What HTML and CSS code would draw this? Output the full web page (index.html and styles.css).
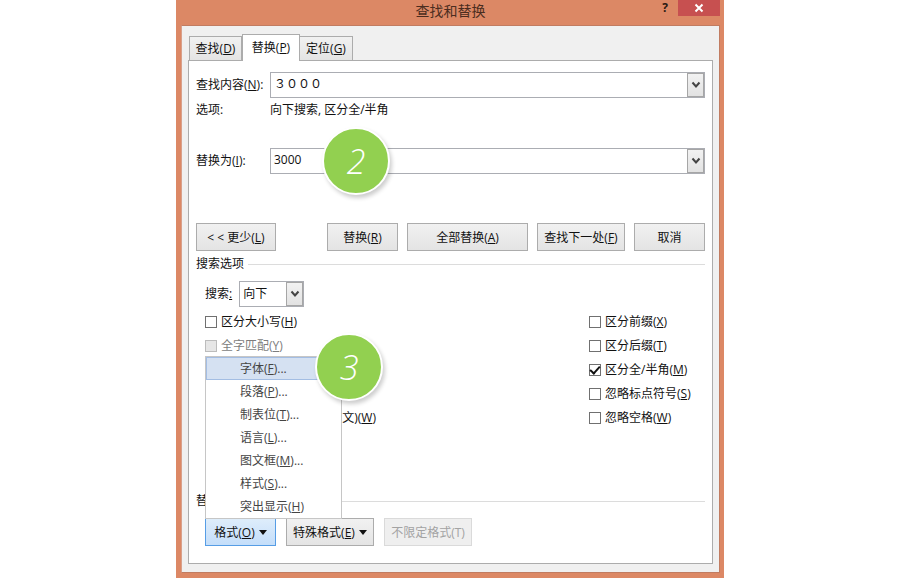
FILE: index.html
```html
<!DOCTYPE html>
<html lang="zh-CN">
<head>
<meta charset="utf-8">
<title>查找和替换</title>
<link rel="stylesheet" href="styles.css">
</head>
<body>
<main class="dialog">
  <header class="titlebar">
    <h1 class="title">查找和替换</h1>
    <div class="window-buttons">
      <button class="help" type="button">?</button>
      <button class="close" type="button" aria-label="关闭">
        <svg width="10" height="10" viewBox="0 0 10 10"><path d="M1.5 1.5 8.5 8.5M8.5 1.5 1.5 8.5" fill="none" stroke="#fff" stroke-width="2"/></svg>
      </button>
    </div>
  </header>
  <div class="client">
    <nav class="tabs">
      <button class="tab" type="button">查找(<u>D</u>)</button>
      <button class="tab active" type="button">替换(<u>P</u>)</button>
      <button class="tab" type="button">定位(<u>G</u>)</button>
    </nav>
    <div class="panel">
      <div class="field">
        <label for="find">查找内容(<u>N</u>):</label>
        <div class="combo">
          <input id="find" type="text" value="&#xFF13;&#xFF10;&#xFF10;&#xFF10;">
          <button class="drop" type="button" aria-label="查找记录"><svg width="10" height="8" viewBox="0 0 10 8"><path d="M1.5 1.5 5 5.5 8.5 1.5" fill="none" stroke="#444" stroke-width="2"/></svg></button>
        </div>
      </div>
      <div class="summary"><span class="key">选项:</span><span>向下搜索, 区分全/半角</span></div>
      <div class="field">
        <label for="replace">替换为(<u>I</u>):</label>
        <div class="combo">
          <input id="replace" type="text" value="3000">
          <button class="drop" type="button" aria-label="替换记录"><svg width="10" height="8" viewBox="0 0 10 8"><path d="M1.5 1.5 5 5.5 8.5 1.5" fill="none" stroke="#444" stroke-width="2"/></svg></button>
        </div>
      </div>
      <div class="actions">
        <button class="btn less" type="button">&lt; &lt; 更少(<u>L</u>)</button>
        <button class="btn narrow" type="button">替换(<u>R</u>)</button>
        <button class="btn broad" type="button">全部替换(<u>A</u>)</button>
        <button class="btn medium" type="button">查找下一处(<u>F</u>)</button>
        <button class="btn narrow" type="button">取消</button>
      </div>
      <h2 class="legend">搜索选项</h2>
      <div class="direction">
        <label for="direction">搜索<u>:</u></label>
        <div class="picker">
          <select id="direction"><option>向下</option><option>向上</option><option>全部</option></select>
          <span class="drop"><svg width="10" height="8" viewBox="0 0 10 8"><path d="M1.5 1.5 5 5.5 8.5 1.5" fill="none" stroke="#444" stroke-width="2"/></svg></span>
        </div>
      </div>
      <div class="options">
        <div class="checks">
          <label><input type="checkbox"><span>区分大小写(<u>H</u>)</span></label>
          <label class="off"><input type="checkbox" disabled><span>全字匹配(<u>Y</u>)</span></label>
          <label class="covered"><input type="checkbox"><span>文)(<u>W</u>)</span></label>
        </div>
        <div class="checks">
          <label><input type="checkbox"><span>区分前缀(<u>X</u>)</span></label>
          <label><input type="checkbox"><span>区分后缀(<u>T</u>)</span></label>
          <label><input type="checkbox" checked><span>区分全/半角(<u>M</u>)</span></label>
          <label><input type="checkbox"><span>忽略标点符号(<u>S</u>)</span></label>
          <label><input type="checkbox"><span>忽略空格(<u>W</u>)</span></label>
        </div>
      </div>
      <h2 class="legend">替换</h2>
      <div class="formats">
        <div class="menu-anchor">
          <button class="btn narrow open" type="button">格式(<u>O</u>)<i class="caret"></i></button>
          <div class="menu" role="menu">
            <button type="button" role="menuitem" class="current">字体(<u>F</u>)...</button>
            <button type="button" role="menuitem">段落(<u>P</u>)...</button>
            <button type="button" role="menuitem">制表位(<u>T</u>)...</button>
            <button type="button" role="menuitem">语言(<u>L</u>)...</button>
            <button type="button" role="menuitem">图文框(<u>M</u>)...</button>
            <button type="button" role="menuitem">样式(<u>S</u>)...</button>
            <button type="button" role="menuitem">突出显示(<u>H</u>)</button>
          </div>
        </div>
        <button class="btn medium" type="button">特殊格式(<u>E</u>)<i class="caret"></i></button>
        <button class="btn medium" type="button" disabled>不限定格式(T)</button>
      </div>
    </div>
  </div>
  <span class="step step-two">2</span>
  <span class="step step-three">3</span>
</main>
</body>
</html>
```
FILE: styles.css
```css
* { box-sizing: border-box; }

body {
  margin: 0;
  background: #fff;
  color: #111;
  font: 12px/16px "Open Sans", "Noto Sans CJK SC", sans-serif;
}

button, input, select {
  margin: 0;
  padding: 0;
  border: 0;
  border-radius: 0;
  color: inherit;
  font: inherit;
}

.dialog {
  position: relative;
  display: flex;
  flex-direction: column;
  max-width: 548px;
  min-height: 100vh;
  margin: 0 auto;
  padding: 0 4px 5px 5px;
  background: #dc8865;
}

.titlebar {
  display: grid;
  grid-template-columns: 1fr auto 1fr;
  height: 25px;
}

.title {
  grid-column: 2;
  margin: 0;
  color: #4b2d20;
  font-size: 14px;
  font-weight: 400;
  line-height: 22px;
}

.window-buttons {
  display: flex;
  justify-content: flex-end;
  align-items: flex-start;
}

.help {
  width: 26px;
  height: 16px;
  background: none;
  color: #2b1a12;
  font-weight: 700;
}

.close {
  display: flex;
  align-items: center;
  justify-content: center;
  width: 42px;
  height: 16px;
  background: #c75050;
}

.client {
  display: flex;
  flex: 1;
  flex-direction: column;
  padding: 8px 6px 8px;
  border: 1px solid #c17c61;
  border-left-color: #d9a08a;
  background: #f0f0f0;
}

.tabs {
  display: flex;
  align-items: flex-end;
  padding-left: 1px;
}

.tab {
  height: 24px;
  width: 53px;
  border: 1px solid #acacac;
  border-bottom: 0;
  background: linear-gradient(#f1f1f1, #e4e4e4);
}

.tab.active {
  width: 58px;
  height: 27px;
  margin-bottom: -1px;
  background: #fff;
  z-index: 1;
}

.tab + .tab { border-left-width: 0; }
.tab.active { border-left-width: 1px; }

.panel {
  flex: 1;
  padding: 11px 7px 17px 7px;
  border: 1px solid #acacac;
  background: #fff;
}

.field {
  display: flex;
  align-items: center;
}

.field label, .key { flex: 0 0 74px; }

.combo {
  display: flex;
  flex: 1;
  height: 26px;
  border: 1px solid #abadb3;
}

.combo input {
  flex: 1;
  min-width: 0;
  padding: 0 3px 2px;
  background: #fff;
}

.drop {
  display: flex;
  align-items: center;
  justify-content: center;
  width: 17px;
  border: 1px solid #a6a6a6;
  background: linear-gradient(#f2f2f2, #e2e2e2);
}

.summary {
  display: flex;
  padding: 4px 0 30px;
}

.actions {
  display: flex;
  gap: 9px;
  padding: 49px 0 5px;
}

.btn {
  height: 28px;
  padding-top: 1px;
  border: 1px solid #acacac;
  background: linear-gradient(#f1f1f1, #e4e4e4);
  white-space: nowrap;
}

.less { width: 80px; margin-right: auto; }
.narrow { width: 71px; }
.medium { width: 88px; }
.broad { width: 121px; }

.btn:disabled {
  border-color: #dadada;
  background: #efefef;
  color: #a3a3a3;
}

.btn.open {
  border-color: #569de5;
  background: linear-gradient(#deedfb, #c4defa);
}

.caret {
  display: inline-block;
  margin-left: 4px;
  border: 4px solid transparent;
  border-top: 5px solid #111;
  border-bottom: 0;
  vertical-align: 2px;
}

.legend {
  display: flex;
  align-items: center;
  gap: 4px;
  margin: 0;
  font-size: 12px;
  font-weight: 400;
}

.legend::after {
  flex: 1;
  height: 1px;
  background: #dcdcdc;
  content: "";
}

.direction {
  display: flex;
  align-items: center;
  gap: 7px;
  padding: 9px 0 2px 9px;
}

.picker {
  position: relative;
  width: 65px;
  height: 26px;
  border: 1px solid #abadb3;
}

.picker select {
  width: 100%;
  height: 100%;
  padding: 0 20px 0 3px;
  appearance: none;
  background: #fff;
}

.picker .drop {
  position: absolute;
  inset: 0 0 0 auto;
  pointer-events: none;
}

.options {
  display: flex;
  justify-content: space-between;
  padding: 0 9px 64px 9px;
}

.checks {
  display: flex;
  flex-direction: column;
}

.checks:last-child { width: 107px; }

.checks label {
  display: flex;
  align-items: center;
  gap: 4px;
  height: 24px;
  padding-top: 1px;
  white-space: nowrap;
}

.checks .covered {
  justify-content: space-between;
  width: 171px;
  margin-top: auto;
}

.checks input {
  flex: none;
  width: 12px;
  height: 12px;
  border: 1px solid #707070;
  appearance: none;
  background: #fff;
}

.checks input:checked {
  display: flex;
  align-items: center;
  justify-content: center;
}

.checks input:checked::before {
  width: 8px;
  height: 4px;
  margin-bottom: 2px;
  border: solid #111;
  border-width: 0 0 2px 2px;
  content: "";
  transform: rotate(-48deg);
}

.off { color: #7d7d7d; }

.checks input:disabled {
  border-color: #bcbcbc;
  background: #e6e6e6;
}

.formats {
  display: flex;
  gap: 10px;
  padding: 9px 0 0 9px;
}

.menu-anchor { position: relative; }

.menu {
  position: absolute;
  bottom: 27px;
  left: 0;
  display: flex;
  flex-direction: column;
  width: 137px;
  border: 1px solid #c6c6c6;
  background: #fff;
}

.menu button {
  height: 23px;
  padding-left: 33px;
  border: 1px solid transparent;
  background: none;
  color: #444;
  text-align: left;
}

.menu .current {
  border-color: #a3bde3;
  background: #d5e1f2;
}

.step {
  position: absolute;
  width: 68px;
  height: 68px;
  border: 2px solid #fff;
  border-radius: 50%;
  background: #92d050;
  box-shadow: 2px 3px 4px rgba(0, 0, 0, 0.2);
  color: #fff;
  font-size: 34px;
  font-style: italic;
  font-weight: 350;
  line-height: 64px;
  text-align: center;
}

.step-two { top: 127px; left: 146px; }
.step-three { top: 333px; left: 139px; }
```
